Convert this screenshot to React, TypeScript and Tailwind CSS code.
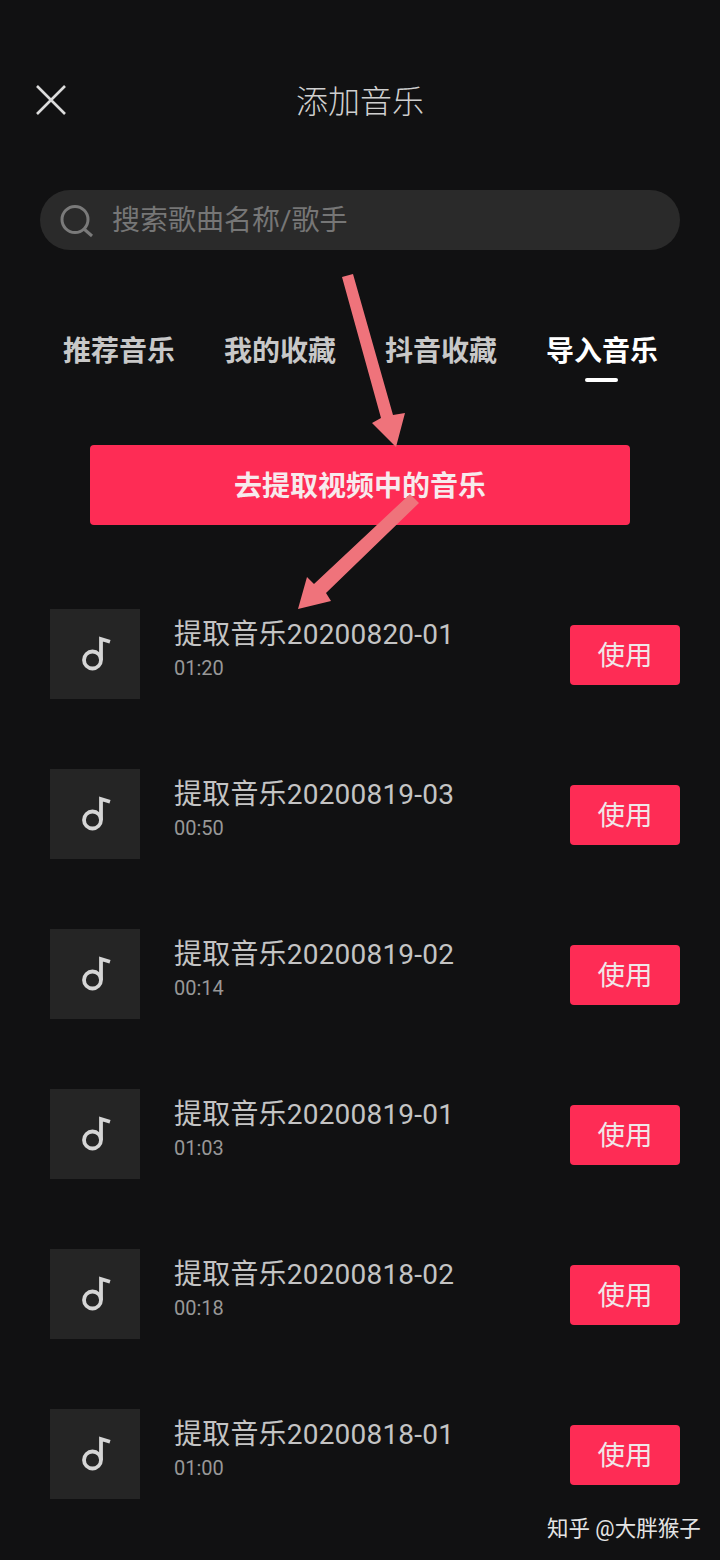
const FONT = "font-['Roboto','Noto_Sans_CJK_SC',sans-serif]";

const tracks = [
  { name: "提取音乐20200820-01", time: "01:20" },
  { name: "提取音乐20200819-03", time: "00:50" },
  { name: "提取音乐20200819-02", time: "00:14" },
  { name: "提取音乐20200819-01", time: "01:03" },
  { name: "提取音乐20200818-02", time: "00:18" },
  { name: "提取音乐20200818-01", time: "01:00" },
];

function Note() {
  return (
    <svg width="30" height="36" viewBox="0 0 30 36" fill="none" stroke="#d6d6d6" strokeWidth="3.8" className="ml-[1px]">
      <circle cx="11.5" cy="24" r="8.5" />
      <path d="M20 24V3L29 5.8" />
    </svg>
  );
}

function Row({ name, time }: { name: string; time: string }) {
  return (
    <div className="flex h-[90px] items-center">
      <div className="flex h-[90px] w-[90px] items-center justify-center bg-[#252525]">
        <Note />
      </div>
      <div className="ml-[34px] flex-1 pb-[11px]">
        <div className="text-[28px] leading-[34px] tracking-[0.2px] text-[#c4c4c4]">{name}</div>
        <div className="mt-[4px] text-[20px] leading-[24px] text-[#989898]">{time}</div>
      </div>
      <button className="mt-[1px] h-[60px] w-[110px] rounded-[4px] bg-[#fe2c55] pt-[3px] text-[27.5px] text-[#f0e6e8]">使用</button>
    </div>
  );
}

export default function App() {
  return (
    <div className={`relative h-[1560px] w-[720px] overflow-hidden bg-[#111112] ${FONT}`}>
      <header className="relative mt-[72px] flex h-[60px] items-center justify-center">
        <svg className="absolute left-[36px] top-[13px]" width="30" height="30" viewBox="0 0 30 30" stroke="#dcdcdc" strokeWidth="2.6">
          <path d="M1 1L29 29M29 1L1 29" />
        </svg>
        <h1 className="text-[32px] font-light text-[#cfcfcf]">添加音乐</h1>
      </header>

      <div className="mx-[40px] mt-[58px] flex h-[60px] items-center rounded-[30px] bg-[#2a2a2a] pl-[20px]">
        <svg width="36" height="36" viewBox="0 0 36 36" fill="none" stroke="#7a7a7a" strokeWidth="3">
          <circle cx="15" cy="17.5" r="13" />
          <path d="M24 27L32 34" />
        </svg>
        <span className="ml-[16px] pt-[2px] text-[28px] text-[#767676]">搜索歌曲名称/歌手</span>
      </div>

      <nav className="mt-[80px] flex h-[40px] pl-[63px] pt-[2px] text-[28px] font-bold leading-[40px] text-[#c8c8c8]">
        <span className="w-[161px]">推荐音乐</span>
        <span className="w-[161px]">我的收藏</span>
        <span className="w-[161px]">抖音收藏</span>
        <span className="relative text-white">
          导入音乐
          <span className="absolute left-[39px] top-[46px] h-[4px] w-[33px] rounded-full bg-white" />
        </span>
      </nav>

      <button className="mx-[90px] mt-[75px] flex h-[80px] w-[540px] items-center justify-center rounded-[4px] bg-[#fe2c55] pt-[4px] text-[28px] font-bold text-[#f7eaed]">
        去提取视频中的音乐
      </button>

      <div className="mt-[84px] flex flex-col gap-[70px] pl-[50px] pr-[40px]">
        {tracks.map((t) => (
          <Row key={t.name} {...t} />
        ))}
      </div>

      <div className="absolute left-[547px] top-[1515px] text-[21.5px] leading-[28px] text-[#e4e4e4]">知乎 @大胖猴子</div>

      <svg className="absolute left-0 top-0" width="720" height="700" viewBox="0 0 720 700">
        <path d="M342 277L353 274L393 415L405 413L396 447L372 423L381 418Z" fill="#ef737b" />
        <path d="M410 494L419 503L326 593L331 601L298 609L307 577L314 584Z" fill="#ef737b" />
      </svg>
    </div>
  );
}
